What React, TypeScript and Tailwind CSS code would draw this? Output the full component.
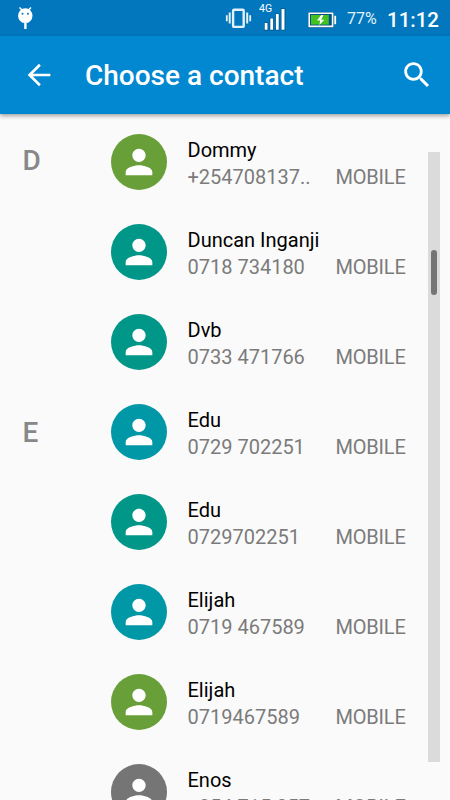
import clsx from 'clsx';

interface Contact {
  name: string;
  phone: string;
  color: string;
  section?: string;
}

const contacts: Contact[] = [
  { name: 'Dommy', phone: '+254708137..', color: 'bg-[#689f38]', section: 'D' },
  { name: 'Duncan Inganji', phone: '0718 734180', color: 'bg-[#009688]' },
  { name: 'Dvb', phone: '0733 471766', color: 'bg-[#009688]' },
  { name: 'Edu', phone: '0729 702251', color: 'bg-[#0097a7]', section: 'E' },
  { name: 'Edu', phone: '0729702251', color: 'bg-[#009688]' },
  { name: 'Elijah', phone: '0719 467589', color: 'bg-[#0097a7]' },
  { name: 'Elijah', phone: '0719467589', color: 'bg-[#689f38]' },
  { name: 'Enos', phone: '+254 715 257..', color: 'bg-[#757575]' },
];

function StatusBar() {
  return (
    <div className="flex h-9 shrink-0 items-start bg-[#0277bd] text-white">
      <svg className="mt-[6px] ml-[17px]" width="17" height="24" viewBox="0 0 17 24" fill="none">
        <path d="M2.5 1.5 5 4M14 1.5 11.5 4" stroke="#fff" strokeWidth="1.5" />
        <ellipse cx="8.3" cy="9.7" rx="7.2" ry="7.4" fill="#fff" />
        <circle cx="5.5" cy="7.8" r="1" fill="#0277bd" />
        <circle cx="11" cy="7.8" r="1" fill="#0277bd" />
        <path d="M8.4 17v6" stroke="#fff" strokeWidth="2.4" />
      </svg>

      {/* vibrate */}
      <svg className="mt-[8px] ml-[191px]" width="27" height="21" viewBox="0 0 27 21" fill="none" stroke="#e3f1f9">
        <rect x="8.1" y="1.7" width="10.6" height="17.2" rx="1" strokeWidth="2.4" />
        <path d="M4.7 4.5v11M22.2 4.5v11" strokeWidth="2" />
        <path d="M1.8 7.3v6M25.2 7.3v6" strokeWidth="1.8" />
      </svg>

      {/* signal */}
      <div className="relative ml-[12px] h-[31px] w-[24px]">
        <span className="absolute top-0 -left-[5px] text-[10.5px] leading-[18px]">4G</span>
        <svg className="absolute top-[8px] left-0" width="24" height="23" viewBox="0 0 24 23">
          <path d="M0 14.5h4.3v8H0zM5.6 10h4.3v12.5H5.6zM11.2 5.5h4.3v17h-4.3zM16.8.5h4.6v22h-4.6z" fill="#01538a" />
          <path d="M.7 15h2.8v6.8H.7zM6.3 10.5h2.8v11.3H6.3zM11.9 6h2.8v15.8h-2.8zM17.5 1h3v20.8h-3z" fill="#fff" />
        </svg>
      </div>

      {/* battery */}
      <svg className="mt-[12px] ml-[20px]" width="30" height="17" viewBox="0 0 30 17">
        <path d="M0 0h25.8v16H0z" fill="#01538a" />
        <path d="M1.2 1.2h23.4v13.2H1.2z" fill="#01538a" stroke="#fff" strokeWidth="1.6" />
        <path d="M3 3h17.8v9.6H3z" fill="#43c11f" />
        <path d="M26.3 3.8h1.8v8.4h-1.8z" fill="#fff" />
        <path d="M13.2 3 9 8.5h3.2L11.4 13l5-5.2h-3.2L15.5 3z" fill="#fff" />
      </svg>

      <span className="mt-[9px] ml-[9px] w-[33px] text-[16px] leading-[20px] whitespace-nowrap text-[#e3f1f9]">77%</span>
      <span className="mt-[8px] ml-[7px] text-[20.5px] leading-[25px] font-medium whitespace-nowrap">11:12</span>
    </div>
  );
}

function Header() {
  return (
    <header className="z-10 flex h-[78px] shrink-0 items-center bg-[#0288d1] text-white shadow-[0_2px_4px_rgba(0,0,0,0.35)]">
      <svg className="ml-[22px]" width="34" height="34" viewBox="0 0 24 24" fill="currentColor">
        <path d="M20 11.1H7.6l5.7-5.7L12 4l-8 8 8 8 1.3-1.4-5.7-5.7H20v-1.8z" />
      </svg>
      <h1 className="mt-[2px] ml-[29px] flex-1 text-[28px] leading-8 font-medium">Choose a contact</h1>
      <svg className="mr-[16px]" width="34" height="34" viewBox="0 0 24 24" fill="currentColor">
        <path d="M15.5 14h-.79l-.28-.27C15.41 12.59 16 11.11 16 9.5 16 5.91 13.09 3 9.5 3S3 5.91 3 9.5 5.91 16 9.5 16c1.61 0 3.09-.59 4.23-1.57l.27.28v.79l5 4.99L20.49 19l-4.99-5zm-6 0C7.01 14 5 11.99 5 9.5S7.01 5 9.5 5 14 7.01 14 9.5 11.99 14 9.5 14z" />
      </svg>
    </header>
  );
}

function ContactRow({ name, phone, color, section }: Contact) {
  return (
    <li className="flex h-[90px] shrink-0 items-center">
      <span
        className={clsx(
          'w-[88px] pl-[22.5px] text-[28px] leading-8 font-medium text-[#888888]',
          section === 'D' ? '-mt-[3px]' : 'mt-[2px]',
        )}
      >
        {section}
      </span>
      <div className={clsx('ml-[23px] flex size-14 items-center justify-center rounded-full', color)}>
        <svg width="40" height="40" viewBox="0 0 24 24" fill="#fff">
          <path d="M12 12c2.21 0 4-1.79 4-4s-1.79-4-4-4-4 1.79-4 4 1.79 4 4 4zm0 2c-2.67 0-8 1.34-8 4v2h16v-2c0-2.66-5.33-4-8-4z" />
        </svg>
      </div>
      <div className="mt-1 ml-[20.5px] text-xl leading-[27px]">
        <p className="text-black">{name}</p>
        <p className="flex text-[#7b7b7b]">
          <span className="w-[148px]">{phone}</span>
          <span className="tracking-[-0.2px]">MOBILE</span>
        </p>
      </div>
    </li>
  );
}

export default function App() {
  return (
    <div className="flex h-[800px] w-[450px] flex-col overflow-hidden bg-[#fafafa] font-['Roboto',sans-serif]">
      <StatusBar />
      <Header />
      <main className="relative min-h-0 flex-1 overflow-hidden">
        <ul className="flex flex-col pt-[3px]">
          {contacts.map((contact, i) => (
            <ContactRow key={i} {...contact} />
          ))}
        </ul>
        {/* fast scroller */}
        <div className="absolute top-[38px] right-[10px] h-[610px] w-3 bg-[#dbdbdb]">
          <div className="mt-[98px] ml-[3px] h-[45px] w-[6px] rounded-full bg-[#757575]" />
        </div>
      </main>
    </div>
  );
}
